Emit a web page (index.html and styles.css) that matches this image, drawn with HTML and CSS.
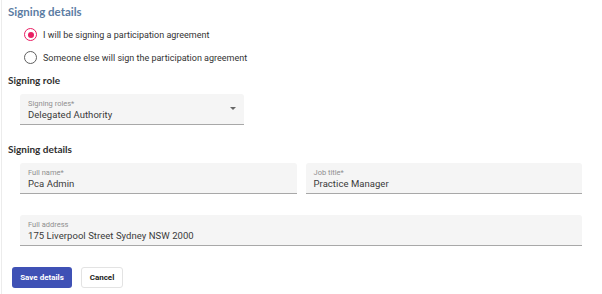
FILE: index.html
```html
<!DOCTYPE html>
<html lang="en">
  <head>
    <meta charset="UTF-8" />
    <meta name="viewport" content="width=device-width, initial-scale=1.0" />
    <title>Signing details</title>
    <link rel="stylesheet" href="styles.css">
  </head>
  <body>
    <div class="panel">
      <h2 class="panel-title">Signing details</h2>

      <div class="radio-group">
        <label class="radio-row">
          <span class="radio checked"></span>
          <span>I will be signing a participation agreement</span>
        </label>
        <label class="radio-row">
          <span class="radio"></span>
          <span>Someone else will sign the participation agreement</span>
        </label>
      </div>

      <h3 class="section-title">Signing role</h3>
      <div class="field field-select">
        <span class="field-label">Signing roles*</span>
        <span class="field-value">Delegated Authority</span>
        <span class="select-arrow"></span>
      </div>

      <h3 class="section-title second">Signing details</h3>
      <div class="field-row">
        <div class="field">
          <span class="field-label">Full name*</span>
          <span class="field-value">Pca Admin</span>
        </div>
        <div class="field">
          <span class="field-label">Job title*</span>
          <span class="field-value">Practice Manager</span>
        </div>
      </div>
      <div class="field field-wide">
        <span class="field-label">Full address</span>
        <span class="field-value">175 Liverpool Street Sydney NSW 2000</span>
      </div>

      <div class="actions">
        <button class="btn btn-primary">Save details</button>
        <button class="btn btn-plain">Cancel</button>
      </div>
    </div>
  </body>
</html>
```

FILE: styles.css
```css
body {
  margin: 0;
  padding: 0;
  font-family: "Roboto", "Liberation Sans", sans-serif;
  background: #fff;
  color: #333;
}

.panel {
  margin-left: 1px;
  border-left: 1px solid #ececec;
  padding: 3px 20px 0 6px;
  height: 291px;
}

.panel-title {
  margin: 0;
  font-family: "Lato", sans-serif;
  font-size: 11.5px;
  font-weight: 700;
  line-height: 18px;
  color: #5b7ca3;
}

.radio-group {
  margin-top: 2px;
  padding-left: 16px;
}

.radio-row {
  display: flex;
  align-items: center;
  gap: 6px;
  height: 23px;
  font-size: 9px;
  color: #333;
}

.radio {
  box-sizing: border-box;
  width: 13px;
  height: 13px;
  border: 1.5px solid #5f5f5f;
  border-radius: 50%;
  display: flex;
  align-items: center;
  justify-content: center;
}

.radio.checked {
  border-color: #e91e63;
}

.radio.checked::after {
  content: "";
  width: 6px;
  height: 6px;
  border-radius: 50%;
  background: #e91e63;
}

.section-title {
  margin: 3px 0 0;
  font-family: "Lato", sans-serif;
  font-size: 10px;
  font-weight: 700;
  line-height: 16px;
  color: #2f2f2f;
}

.section-title.second {
  margin-top: 16px;
}

.field {
  position: relative;
  box-sizing: border-box;
  height: 31px;
  padding: 5px 8px 0;
  background: #f5f5f5;
  border-bottom: 1px solid #a8a8a8;
  border-radius: 3px 3px 0 0;
  display: flex;
  flex-direction: column;
}

.field-select {
  width: 224px;
  margin: 6px 0 0 12px;
}

.field-label {
  font-size: 7.5px;
  line-height: 9px;
  color: #8f8f8f;
}

.field-value {
  font-size: 9.5px;
  line-height: 14px;
  color: #3a3a3a;
  letter-spacing: 0.05px;
}

.select-arrow {
  position: absolute;
  right: 8px;
  top: 13px;
  border-left: 3.5px solid transparent;
  border-right: 3.5px solid transparent;
  border-top: 3.5px solid #666;
}

.field-row {
  display: grid;
  grid-template-columns: 1fr 1fr;
  gap: 9px;
  margin: 6px 0 0 12px;
}

.field-wide {
  margin: 21px 0 0 12px;
}

.actions {
  display: flex;
  gap: 9px;
  margin: 21px 0 0 4px;
}

.btn {
  height: 21px;
  border-radius: 3px;
  font-family: "Roboto", sans-serif;
  font-size: 8px;
  font-weight: 700;
  padding: 0;
  white-space: nowrap;
  cursor: pointer;
}

.btn-primary {
  width: 60px;
  background: #3f51b5;
  border: none;
  color: #fff;
}

.btn-plain {
  width: 42px;
  background: #fff;
  border: 1px solid #e3e3e3;
  color: #222;
}
```
